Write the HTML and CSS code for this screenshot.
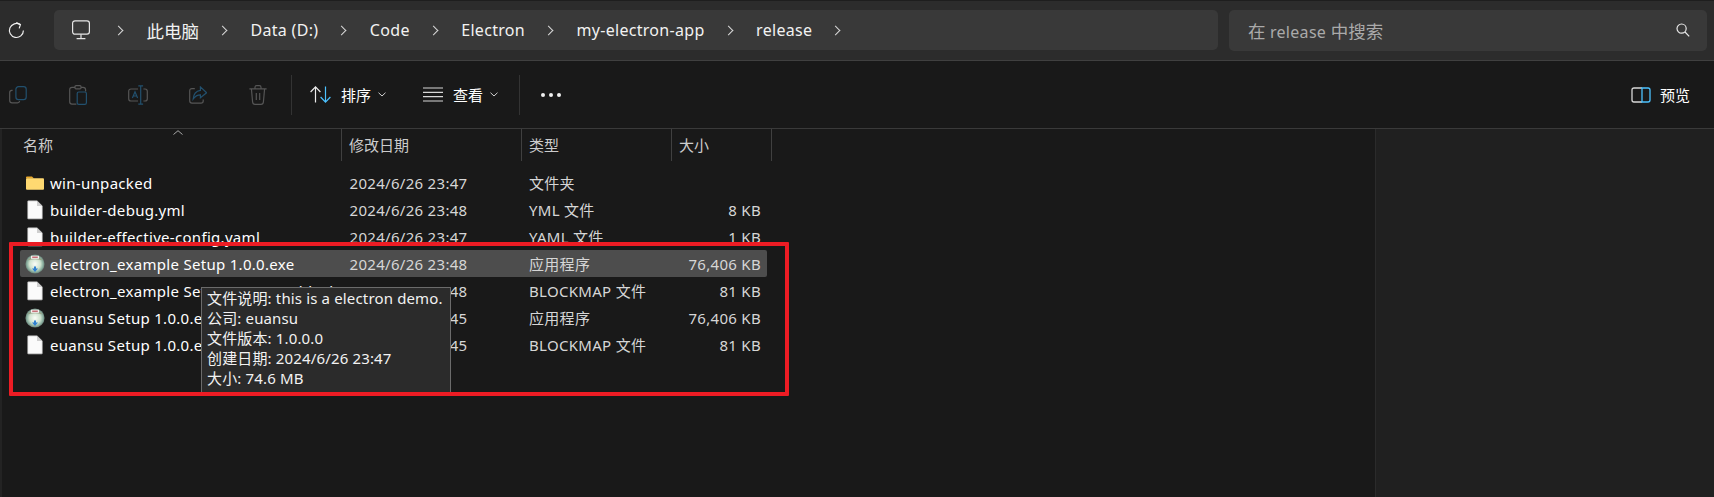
FILE: index.html
```html
<!DOCTYPE html>
<html lang="zh-CN">
  <head>
    <meta charset="UTF-8" />
    <meta name="viewport" content="width=device-width, initial-scale=1.0" />
    <title>release</title>
    <link rel="stylesheet" href="styles.css">
  </head>

  <body>
    <svg width="0" height="0" class="defs">
      <defs>
        <symbol id="fileIcon" viewBox="0 0 20 20">
          <path d="M2.6 1.5 Q2.6 .7 3.4 .7 H12 L17.4 6 V18.2 Q17.4 19 16.6 19 H3.4 Q2.6 19 2.6 18.2 Z" fill="#fbfbfb" stroke="#8a8a8a" stroke-width=".8"/>
          <path d="M12 .9 V6 H17.2 Z" fill="#cfcfcf"/>
        </symbol>
        <radialGradient id="exeBall" cx="50%" cy="50%" r="52%">
          <stop offset="0" stop-color="#fbfdf8"/>
          <stop offset=".55" stop-color="#cfe3cf"/>
          <stop offset=".82" stop-color="#86ab9c"/>
          <stop offset="1" stop-color="#5f6f68"/>
        </radialGradient>
        <symbol id="exeIcon" viewBox="0 0 20 20">
          <circle cx="10" cy="10" r="9.6" fill="url(#exeBall)"/>
          <path d="M2 6.5 Q10 -1.5 18 6.5 Q10 4 2 6.5 Z" fill="#93a084"/>
          <rect x="6" y="1.8" width="8" height="3" fill="#f6f1f1"/>
          <rect x="7.2" y="2.6" width="5.6" height="1.2" fill="#b8525a"/>
          <path d="M9 12.5 H11 V14.6 H13 L10 18 L7 14.6 H9 Z" fill="#2f7fd0"/>
        </symbol>
      </defs>
    </svg>

    <header class="topbar">
      <button class="refresh">
        <svg width="17" height="17" viewBox="0 0 17 17" fill="none" stroke="#f0f0f0" stroke-width="1.2"><path d="M12.2 2.6 A7 7 0 1 0 15.4 8.5"/><path d="M8.3 .6 L12.4 2.6 L11.2 6.4"/></svg>
      </button>
      <nav class="address">
        <svg class="pcIcon" width="20" height="20" viewBox="0 0 20 20" fill="none" stroke="#e6e6e6" stroke-width="1.2"><rect x="1.6" y=".8" width="16.8" height="13.4" rx="2.4"/><path d="M10 14.2 V18.4 M5.6 18.6 H14.4"/></svg>
        <span class="chev firstChev"></span><span class="crumb cjk">此电脑</span>
        <span class="chev"></span><span class="crumb">Data (D:)</span>
        <span class="chev"></span><span class="crumb">Code</span>
        <span class="chev"></span><span class="crumb">Electron</span>
        <span class="chev"></span><span class="crumb">my-electron-app</span>
        <span class="chev"></span><span class="crumb">release</span>
        <span class="chev"></span>
      </nav>
      <div class="search">
        <span><span class="cjk">在</span> release <span class="cjk">中搜索</span></span>
        <svg width="14" height="14" viewBox="0 0 14 14" fill="none" stroke="#e8e8e8" stroke-width="1.2"><circle cx="5.6" cy="5.6" r="4.6"/><path d="M9 9 L13.2 13.4"/></svg>
      </div>
    </header>

    <section class="toolbar">
      <div class="actions">
        <svg width="18" height="18" viewBox="0 0 18 18" fill="none" stroke-width="1.2"><path d="M3.6 4.4 H2.8 Q.7 4.4 .7 6.5 V14.5 Q.7 16.8 3 16.8 H8.5 Q10.4 16.8 10.6 15" stroke="#565656"/><rect x="6.9" y=".7" width="10.3" height="13" rx="2.6" stroke="#22506e"/></svg>
        <svg width="18" height="20" viewBox="0 0 18 20" fill="none" stroke-width="1.2"><path d="M6 2.4 H3 Q.7 2.4 .7 4.7 V16.8 Q.7 19.2 3 19.2 H7.4 M12 2.4 H14 Q16.6 2.4 16.6 4.8 V6.4 M6 1.8 Q6 .7 7 .7 H11 Q12 .7 12 1.8 V3 Q12 3.8 11 3.8 H7 Q6 3.8 6 3 Z" stroke="#565656"/><rect x="8.2" y="7" width="9.2" height="12.3" rx="1.6" stroke="#22506e"/></svg>
        <svg class="renameIcon" width="20" height="20" viewBox="0 0 20 20" fill="none" stroke-width="1.2"><path d="M10 4 H3 Q.7 4 .7 6.3 V13.7 Q.7 16 3 16 H10 M15.4 4 H17 Q19.3 4 19.3 6.3 V13.7 Q19.3 16 17 16 H15.4" stroke="#565656"/><path d="M10.3 .8 H15.1 M12.7 .8 V19.2 M10.3 19.2 H15.1 M4.4 13 L7 6.8 L9.6 13 M5.4 11 H8.6" stroke="#22506e"/></svg>
        <svg width="18" height="18" viewBox="0 0 18 18" fill="none" stroke-width="1.2"><path d="M5.8 2.6 H3 Q.7 2.6 .7 4.9 V14.8 Q.7 17.2 3 17.2 H12 Q14.2 17.2 14.2 15 V13.6" stroke="#565656"/><path d="M11.4 .9 L17.6 6.8 L11.4 11.8 V8.8 Q7 8.8 4.2 13 Q4.8 5.2 11.4 4.4 Z" stroke="#22506e"/></svg>
        <svg width="18" height="20" viewBox="0 0 18 20" fill="none" stroke="#565656" stroke-width="1.2"><path d="M.4 3.8 H17.6 M6 3.6 V2.2 Q6 .7 7.5 .7 H10.5 Q12 .7 12 2.2 V3.6 M2.4 3.8 L3.6 17 Q3.8 19.3 6 19.3 H12 Q14.2 19.3 14.4 17 L15.6 3.8 M7.3 8 V15 M10.7 8 V15"/></svg>
      </div>
      <span class="tbDivider"></span>
      <div class="tbBtn sortBtn">
        <svg width="22" height="17" viewBox="0 0 22 17" fill="none" stroke-width="1.2"><path d="M5.5 16.5 V1 M.6 6 L5.5 .9 L10.4 6" stroke="#ececec"/><path d="M15.5 .5 V16 M10.6 11 L15.5 16.1 L20.4 11" stroke="#4cc2ff"/></svg>
        <span>排序</span>
        <svg class="tbChev" width="8" height="5" viewBox="0 0 8 5" fill="none" stroke="#cfcfcf"><path d="M.5 .7 L4 4 L7.5 .7"/></svg>
      </div>
      <div class="tbBtn viewBtn">
        <svg width="20" height="15" viewBox="0 0 20 15" fill="none" stroke="#d8d8d8" stroke-width="1.2"><path d="M0 1 H20 M0 5.3 H20 M0 9.6 H20 M0 14 H20"/></svg>
        <span>查看</span>
        <svg class="tbChev" width="8" height="5" viewBox="0 0 8 5" fill="none" stroke="#cfcfcf"><path d="M.5 .7 L4 4 L7.5 .7"/></svg>
      </div>
      <span class="tbDivider"></span>
      <div class="dots"><i></i><i></i><i></i></div>
      <div class="preview">
        <svg width="20" height="16" viewBox="0 0 20 16" fill="none" stroke-width="1.3"><path d="M11 1 H3 Q1 1 1 3 V13 Q1 15 3 15 H11" stroke="#d8d8d8"/><path d="M11 1 H17 Q19 1 19 3 V13 Q19 15 17 15 H11 Z" stroke="#4cc2ff"/></svg>
        <span>预览</span>
      </div>
    </section>

    <main class="content">
      <section class="files">
        <div class="listHead">
          <svg class="sortArrow" width="10" height="5" viewBox="0 0 10 5" fill="none" stroke="#a8a8a8"><path d="M.5 4.5 L5 .7 L9.5 4.5"/></svg>
          <div class="hCell hName">名称</div>
          <div class="hCell hDate">修改日期</div>
          <div class="hCell hType">类型</div>
          <div class="hCell hSize">大小</div>
        </div>

        <div class="rows">
          <div class="row">
            <div class="name">
              <svg class="icon" viewBox="-1 -3 20 20"><path d="M0 1.5 Q0 .5 1 .5 H6 L8 2.5 H0 Z" fill="#e9a92c"/><rect y="2.2" width="18" height="11.6" rx="1" fill="#ffd971"/></svg>
              win-unpacked
            </div>
            <div class="date">2024/6/26 23:47</div><div class="type">文件夹</div><div class="size"></div>
          </div>
          <div class="row">
            <div class="name"><svg class="icon"><use href="#fileIcon"/></svg>builder-debug.yml</div>
            <div class="date">2024/6/26 23:48</div><div class="type">YML 文件</div><div class="size">8 KB</div>
          </div>
          <div class="row">
            <div class="name"><svg class="icon"><use href="#fileIcon"/></svg>builder-effective-config.yaml</div>
            <div class="date">2024/6/26 23:47</div><div class="type">YAML 文件</div><div class="size">1 KB</div>
          </div>
          <div class="row selected">
            <div class="name"><svg class="icon"><use href="#exeIcon"/></svg>electron_example Setup 1.0.0.exe</div>
            <div class="date">2024/6/26 23:48</div><div class="type">应用程序</div><div class="size">76,406 KB</div>
          </div>
          <div class="row">
            <div class="name"><svg class="icon"><use href="#fileIcon"/></svg>electron_example Setup 1.0.0.exe.blockmap</div>
            <div class="date">2024/6/26 23:48</div><div class="type">BLOCKMAP 文件</div><div class="size">81 KB</div>
          </div>
          <div class="row">
            <div class="name"><svg class="icon"><use href="#exeIcon"/></svg>euansu Setup 1.0.0.exe</div>
            <div class="date">2024/6/26 23:45</div><div class="type">应用程序</div><div class="size">76,406 KB</div>
          </div>
          <div class="row">
            <div class="name"><svg class="icon"><use href="#fileIcon"/></svg>euansu Setup 1.0.0.exe.blockmap</div>
            <div class="date">2024/6/26 23:45</div><div class="type">BLOCKMAP 文件</div><div class="size">81 KB</div>
          </div>
        </div>
      </section>
      <aside class="previewPane"></aside>
    </main>

    <div class="tooltip">
      <p>文件说明: this is a electron demo.</p>
      <p>公司: euansu</p>
      <p>文件版本: 1.0.0.0</p>
      <p>创建日期: 2024/6/26 23:47</p>
      <p>大小: 74.6 MB</p>
    </div>
    <div class="redBox"></div>
  </body>
</html>
```

FILE: styles.css
```css
html,
body {
  margin: 0;
  padding: 0;
}

body {
  position: relative;
  width: 1714px;
  height: 497px;
  overflow: hidden;
  display: flex;
  flex-direction: column;
  background-color: #191919;
  color: #fff;
  font-family: "Noto Sans", "Noto Sans CJK SC", sans-serif;
  font-size: 15px;
  letter-spacing: 0.3px;
}

.defs {
  position: absolute;
}

.cjk {
  font-size: 17.5px;
  letter-spacing: 0;
}

/* top bar */
.topbar {
  flex-shrink: 0;
  height: 60px;
  display: flex;
  align-items: center;
  background-color: #2c2c2c;
  border-bottom: 1px solid #404040;
  box-shadow: inset 0 1px 0 #1e1e1e;
}

.refresh {
  width: 54px;
  height: 40px;
  padding: 0 0 0 8px;
  border: none;
  background: none;
  display: flex;
  align-items: center;
}

.address {
  width: 1164px;
  height: 40px;
  padding-left: 17px;
  box-sizing: border-box;
  display: flex;
  align-items: center;
  background-color: #393939;
  border-radius: 5px;
}

.crumb {
  font-size: 16px;
  letter-spacing: 0.3px;
  color: #f2f2f2;
  white-space: nowrap;
}

.crumb.cjk {
  font-size: 17.5px;
  letter-spacing: 0;
}

.chev {
  width: 7px;
  height: 7px;
  margin: 0 24.5px 0 20px;
  border-top: 1.3px solid #d8d8d8;
  border-right: 1.3px solid #d8d8d8;
  transform: rotate(45deg);
  box-sizing: border-box;
  flex-shrink: 0;
}

.firstChev {
  margin-left: 24px;
}

.search {
  width: 478px;
  height: 41px;
  margin-left: 11px;
  padding: 0 17px 0 19px;
  box-sizing: border-box;
  display: flex;
  align-items: center;
  justify-content: space-between;
  background-color: #393939;
  border-radius: 5px;
  font-size: 16px;
  color: #aaaaaa;
}

/* toolbar */
.toolbar {
  flex-shrink: 0;
  height: 67px;
  display: flex;
  align-items: center;
  padding-left: 9px;
  border-bottom: 1px solid #3a3a3a;
}

.actions {
  display: flex;
  align-items: center;
  gap: 42px;
}

.renameIcon {
  margin: 0 -1px;
}

.tbDivider {
  width: 1px;
  height: 40px;
  background-color: #333333;
  flex-shrink: 0;
}

.actions + .tbDivider {
  margin-left: 24px;
}

.tbBtn {
  display: flex;
  align-items: center;
  letter-spacing: 0;
}

.tbBtn span {
  margin-left: 9px;
}

.tbChev {
  margin-left: 7px;
}

.sortBtn {
  margin-left: 18px;
}

.viewBtn {
  margin-left: 37px;
  margin-right: 21px;
}

.viewBtn span {
  margin-left: 10px;
}

.dots {
  display: flex;
  gap: 4px;
  margin-left: 21px;
}

.dots i {
  width: 4px;
  height: 4px;
  border-radius: 50%;
  background-color: #f0f0f0;
}

.preview {
  margin-left: auto;
  margin-right: 24px;
  display: flex;
  align-items: center;
  gap: 9px;
  letter-spacing: 0;
}

/* file list */
.content {
  flex-grow: 1;
  display: flex;
}

.files {
  width: 1376px;
  flex-shrink: 0;
  box-sizing: border-box;
  border-left: 2px solid #232323;
  border-right: 1px solid #2b2b2b;
}

.previewPane {
  flex-grow: 1;
  background-color: #202020;
}

.listHead {
  position: relative;
  height: 32px;
  display: grid;
  grid-template-columns: 340px 180px 150px 100px;
  color: #cccccc;
  letter-spacing: 0;
}

.sortArrow {
  position: absolute;
  left: 171px;
  top: 1px;
}

.hCell {
  display: flex;
  align-items: center;
  padding-left: 7px;
  padding-bottom: 2px;
  border-right: 1px solid #404040;
  box-sizing: border-box;
}

.hName {
  padding-left: 21px;
}

.rows {
  margin-top: 8px;
  margin-left: 18px;
  width: 747px;
}

.row {
  height: 27px;
  display: grid;
  grid-template-columns: 329.5px 179.5px 150px 82px;
  align-items: center;
  border-radius: 2px;
  white-space: nowrap;
}

.selected {
  background-color: #4d4d4d;
}

.name {
  display: flex;
  align-items: center;
  overflow: hidden;
  padding-left: 5px;
}

.icon {
  width: 20px;
  height: 20px;
  margin-right: 5px;
  flex-shrink: 0;
}

.date,
.type,
.size {
  color: #d6d6d6;
}

.size {
  text-align: right;
}

/* things lying over the list */
.tooltip {
  position: absolute;
  left: 201px;
  top: 287px;
  width: 250px;
  height: 106px;
  padding: 0 5px;
  box-sizing: border-box;
  background-color: #2b2b2b;
  border: 1px solid #6b6b6b;
  color: #f2f2f2;
  letter-spacing: 0.15px;
}

.tooltip p {
  margin: 0;
  line-height: 20px;
  white-space: nowrap;
}

.redBox {
  position: absolute;
  left: 9px;
  top: 242px;
  width: 780px;
  height: 154px;
  box-sizing: border-box;
  border: 4px solid #ed1c24;
  border-radius: 1px;
}
```
